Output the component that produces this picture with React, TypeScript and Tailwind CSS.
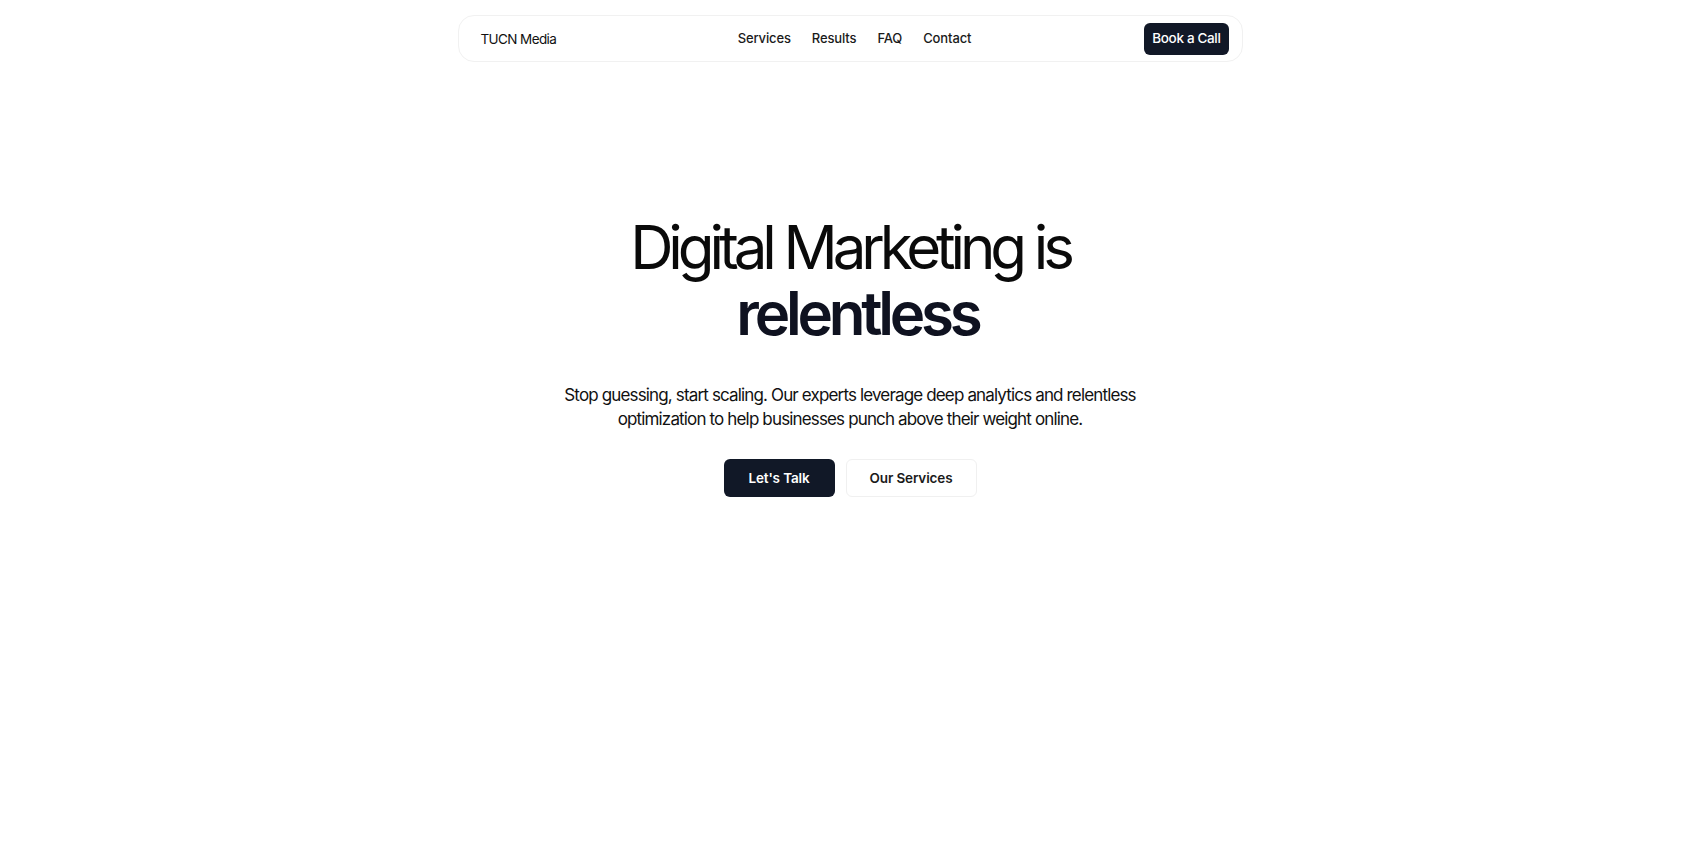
export default function App() {
  return (
    <div
      className="min-h-screen bg-white text-[#111111]"
      style={{ fontFamily: "Inter, 'Noto Sans', sans-serif" }}
    >
      <header className="pt-[15px]">
        <nav className="mx-auto grid h-[47px] w-[785px] grid-cols-[1fr_auto_1fr] items-center rounded-2xl border border-[#f1f1f1] bg-white pl-[22px] pr-[13px]">
          <a className="justify-self-start pt-px text-[13.5px] tracking-[-0.045em] text-[#111111]">
            TUCN Media
          </a>
          <ul className="flex items-center gap-[21px] pt-px text-[13px] font-medium tracking-[-0.01em] text-[#1a1a1a]">
            <li>Services</li>
            <li>Results</li>
            <li>FAQ</li>
            <li>Contact</li>
          </ul>
          <button className="h-[32px] justify-self-end rounded-md bg-[#111827] px-[8px] text-[13.5px] font-medium tracking-[-0.025em] text-white">
            Book a Call
          </button>
        </nav>
      </header>

      <main className="flex flex-col items-center pt-[152px] text-center">
        <h1 className="text-[60px] leading-[66px] tracking-[-0.085em]">
          <span className="block font-normal text-[#0a0a0a]">Digital Marketing is</span>
          <span className="block pl-[15px] font-semibold tracking-[-0.07em] text-[#0f1220]">relentless</span>
        </h1>
        <p className="mt-[37px] whitespace-nowrap text-[17px] leading-[24px] tracking-[-0.05em] text-[#111111]">
          Stop guessing, start scaling. Our experts leverage deep analytics and relentless
          <br />
          optimization to help businesses punch above their weight online.
        </p>
        <div className="mt-[28px] flex items-center gap-[11px]">
          <button className="h-[38px] w-[111px] rounded-md bg-[#111827] text-[13.5px] font-semibold tracking-[-0.01em] text-white">
            Let's Talk
          </button>
          <button className="h-[38px] w-[131px] rounded-md border border-[#f0f0f0] bg-white text-[13.5px] font-semibold tracking-[-0.01em] text-[#1a1a1a]">
            Our Services
          </button>
        </div>
      </main>
    </div>
  );
}
